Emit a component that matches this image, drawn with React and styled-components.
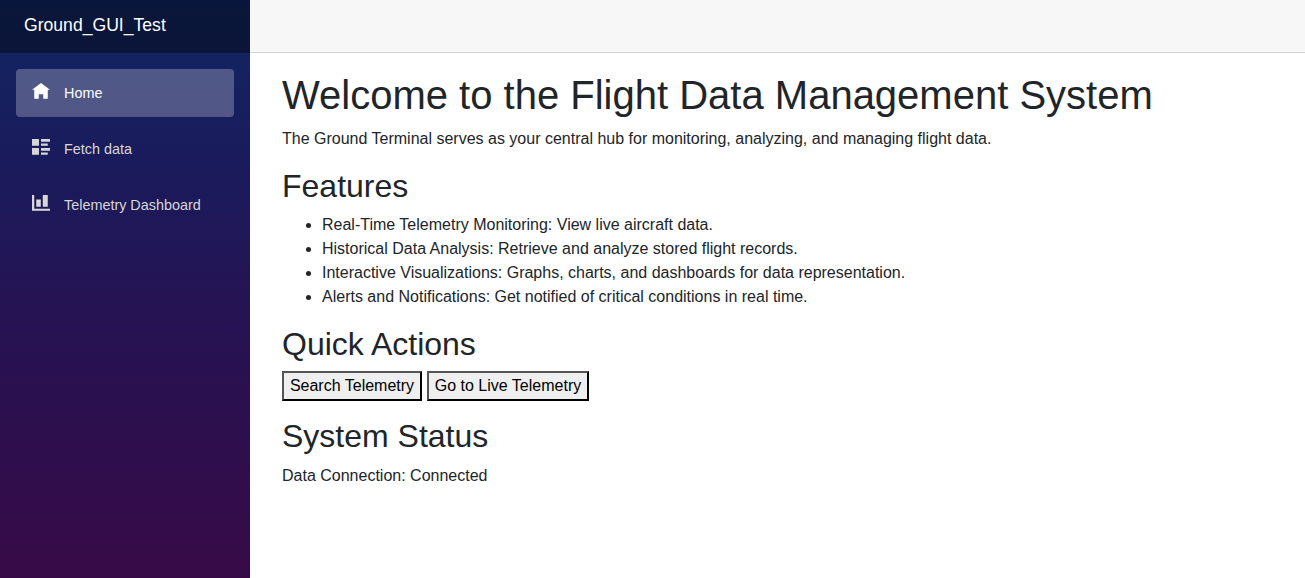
import React from "react";
import styled, { createGlobalStyle } from "styled-components";

const GlobalStyle = createGlobalStyle`
  *, *::before, *::after { box-sizing: border-box; }
  body {
    margin: 0;
    overflow: hidden;
    font: 400 16px/1.5 "Liberation Sans", Arial, sans-serif;
    color: #212529;
    background: #fff;
  }
`;

const Page = styled.div`
  display: flex;
  height: 100vh;
`;

const Sidebar = styled.aside`
  flex: none;
  width: 250px;
  background-image: linear-gradient(180deg, #102663 0%, #142260 10%, #1a1b5c 28%, #261353 55%, #370a47 100%);
`;

const Brand = styled.div`
  display: flex;
  align-items: center;
  height: 53px;
  padding: 0 24px 3px;
  font-size: 17.6px;
  color: #fff;
  background: rgba(0, 0, 0, 0.4);
`;

const Nav = styled.nav`
  display: flex;
  flex-direction: column;
  gap: 8px;
  padding: 16px;
`;

const NavLink = styled.a`
  display: flex;
  align-items: center;
  height: 48px;
  padding: 0 16px;
  border-radius: 4px;
  font-size: 14.4px;
  line-height: 48px;
  color: ${(p) => (p.$active ? "#fff" : "#d7d7d7")};
  background: ${(p) => (p.$active ? "rgba(255, 255, 255, 0.25)" : "transparent")};
`;

const NavIcon = styled.svg`
  flex: none;
  width: 18px;
  height: 18px;
  margin: 0 14px 2px 0;
  fill: currentColor;
`;

const Main = styled.main`
  flex: 1;
`;

const TopRow = styled.div`
  height: 53px;
  background: #f7f7f7;
  border-bottom: 1px solid #d6d5d5;
`;

const Content = styled.article`
  padding: 18px 24px 0 32px;
`;

const Title = styled.h1`
  margin: 0 0 8px;
  font-size: 40px;
  font-weight: 500;
  line-height: 1.2;
`;

const Heading = styled.h2`
  margin: 0 0 8px;
  font-size: 32px;
  font-weight: 500;
  line-height: 1.2;
`;

const Text = styled.p`
  margin: 0 0 16px;
`;

const List = styled.ul`
  margin: 0 0 16px;
  padding-left: 40px;
`;

const Actions = styled.div`
  display: flex;
  gap: 5px;
  margin: -1px 0 16px;
`;

const Button = styled.button`
  width: ${(p) => p.$width}px;
  height: 30px;
  padding: 1px 0;
  font: inherit;
  white-space: nowrap;
  color: #000;
  background: #efefef;
  border: 2px outset #000;
`;

const Status = styled.p`
  margin: 9px 0 16px;
`;

const links = [
  { label: "Home", active: true, d: "M4 0l-4 3h1v4h2v-2h2v2h2v-4.03l1 .03-4-3z" },
  { label: "Fetch data", d: "M0 0v3h3.1v-3h-3.1zm4 0v1.2h4v-1.2h-4zm0 2v1h3v-1h-3zm-4 2v3h3.1v-3h-3.1zm4 0v1.2h4v-1.2h-4zm0 2v1h3v-1h-3z" },
  { label: "Telemetry Dashboard", d: "M0 0v7h8v-.9h-7v-6.1h-1zm4.8 0v5.2h2.2v-5.2h-2.2zm-2.9 2v3.2h2v-3.2h-2z" },
];

const features = [
  "Real-Time Telemetry Monitoring: View live aircraft data.",
  "Historical Data Analysis: Retrieve and analyze stored flight records.",
  "Interactive Visualizations: Graphs, charts, and dashboards for data representation.",
  "Alerts and Notifications: Get notified of critical conditions in real time.",
];

export default function App() {
  return (
    <Page>
      <GlobalStyle />
      <Sidebar>
        <Brand>Ground_GUI_Test</Brand>
        <Nav>
          {links.map((l) => (
            <NavLink key={l.label} $active={l.active}>
              <NavIcon viewBox="0 0 8 8"><path d={l.d} /></NavIcon>
              {l.label}
            </NavLink>
          ))}
        </Nav>
      </Sidebar>
      <Main>
        <TopRow />
        <Content>
          <Title>Welcome to the Flight Data Management System</Title>
          <Text>The Ground Terminal serves as your central hub for monitoring, analyzing, and managing flight data.</Text>
          <Heading>Features</Heading>
          <List>{features.map((f) => <li key={f}>{f}</li>)}</List>
          <Heading>Quick Actions</Heading>
          <Actions>
            <Button $width={140}>Search Telemetry</Button>
            <Button $width={162}>Go to Live Telemetry</Button>
          </Actions>
          <Heading>System Status</Heading>
          <Status>Data Connection: Connected</Status>
        </Content>
      </Main>
    </Page>
  );
}
